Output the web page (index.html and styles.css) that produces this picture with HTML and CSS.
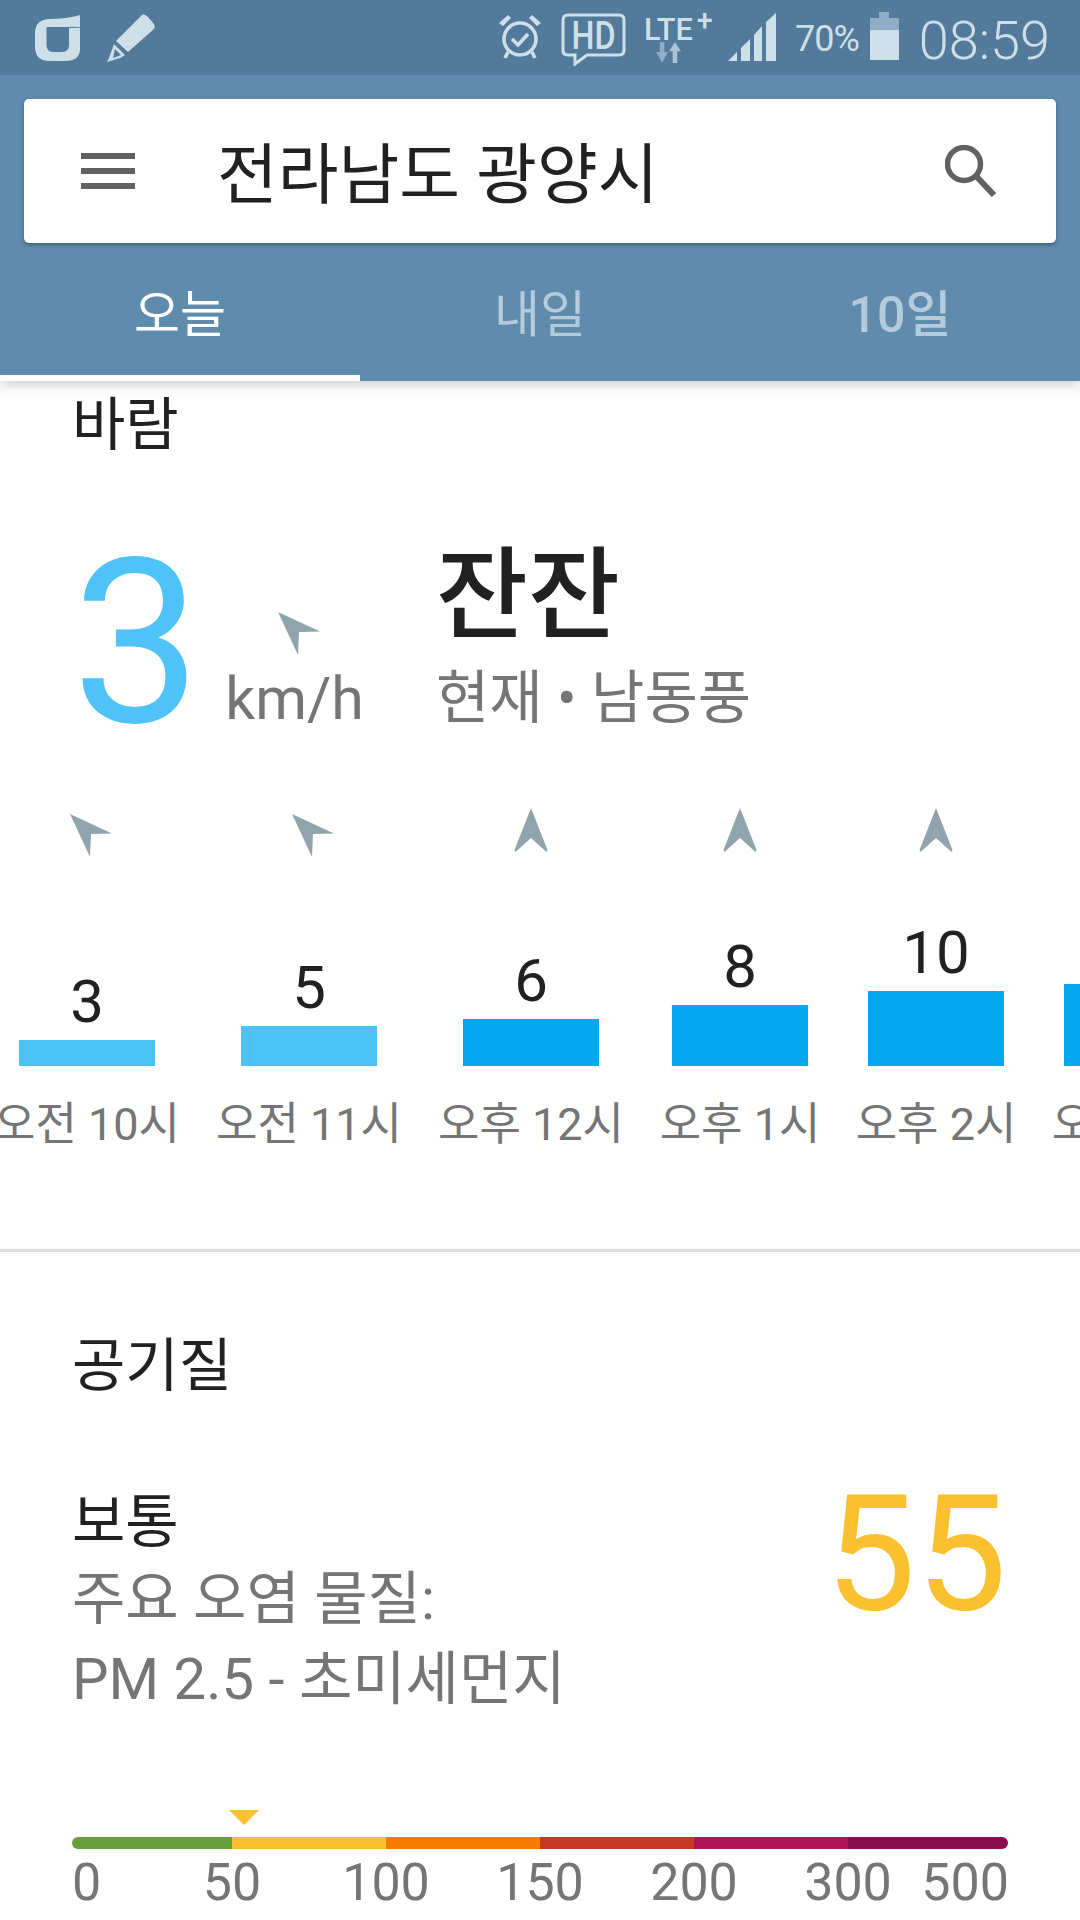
FILE: index.html
```
<!DOCTYPE html>
<html lang="ko">
<head>
<meta charset="utf-8">
<title>날씨</title>
<link rel="stylesheet" href="styles.css">
</head>
<body>
<div class="page">
  <header class="header">
    <div class="status">
      <div class="status-left">
        <svg class="ic-o" viewBox="0 0 45 46"><path class="fill" fill-rule="evenodd" d="M45 0L45 34Q45 46 30 46L15 46Q0 46 0 32L0 18Q0 5 14 4Q32 4 45 0ZM11.500 12L11.500 30Q11.500 37 18 37L27 37Q34 37 34 30L34 13L45 12.500L45 11.500L32 12Z"/></svg>
        <svg class="ic-pen" viewBox="0 0 48 48"><path class="fill" d="M35 1C37 0 39 1 41 3L47 10C48 12 48 13 47 15L21 38L9 27Z"/><path class="fill" fill-rule="evenodd" d="M7 30L18 41L13 44L0 48L2 44ZM8 35L6 44L14 41Z"/></svg>
      </div>
      <div class="status-right">
        <svg class="ic-alarm" viewBox="0 0 44 46"><path class="fill" d="M1 9L10 1L13 4L5 12ZM43 9L34 1L31 4L39 12Z"/><circle class="line" cx="22" cy="25" r="16" stroke-width="3.5"/><path class="line" stroke-width="3.5" d="M14 25L20 31L30 20"/><path class="line" stroke-width="3.5" d="M10 38L7 44M34 38L37 44"/></svg>
        <div class="hd"><svg class="hd-frame" viewBox="0 0 65 53"><path class="line" stroke-width="3" d="M7 2H58Q63 2 63 7V37Q63 42 58 42H26L14 51V42H7Q2 42 2 37V7Q2 2 7 2Z"/></svg><span class="hd-text">HD</span></div>
        <div class="lte">
          <span class="lte-text">LTE<sup class="lte-plus">+</sup></span>
          <svg class="lte-arrows" viewBox="0 0 28 24"><path class="dim" d="M4 0H9V11H13L6.500 23L0 11H4Z"/><path class="dim2" d="M18 23H23V10H27L20.500 0L14 10H18Z"/></svg>
        </div>
        <svg class="ic-signal" viewBox="0 0 48 48"><path class="fill" d="M0 48L9 39V48ZM13 35L22 26V48H13ZM26 22L34 13V48H26ZM38 9L48 0V48H38Z"/></svg>
        <span class="pct">70%</span>
        <div class="battery"><div class="bat-cap"></div><div class="bat-empty"></div><div class="bat-fill"></div></div>
        <span class="clock">08:59</span>
      </div>
    </div>
    <div class="appbar">
      <div class="search">
        <div class="menu"><i></i><i></i><i></i></div>
        <div class="city">전라남도 광양시</div>
        <svg class="ic-search" viewBox="0 0 52 52"><circle cx="19" cy="19" r="16.500" fill="none" stroke="#616161" stroke-width="5.500"/><path d="M31 31L49 50" stroke="#616161" stroke-width="6" fill="none"/></svg>
      </div>
      <nav class="tabs">
        <div class="tab tab-on">오늘</div>
        <div class="tab">내일</div>
        <div class="tab tab-num">10일</div>
      </nav>
    </div>
  </header>

  <main class="content">
    <section class="wind">
      <h2 class="sec-title wind-title">바람</h2>
      <div class="now">
        <div class="now-num">3</div>
        <div class="now-unit">
          <svg class="arrow-main" viewBox="0 0 42 42"><path class="arrow" d="M0 0L42 19.500L21 20L20 43Z"/></svg>
          <span class="unit">km/h</span>
        </div>
        <div class="now-desc">
          <div class="calm">잔잔</div>
          <div class="dir">현재 • 남동풍</div>
        </div>
      </div>
      <div class="hours">
        <div class="hour">
          <svg class="arrow-svg" viewBox="-8 -6 50 50"><path class="arrow" d="M0 0L42 19.500L21 20L20 43Z"/></svg>
          <div class="chart"><span class="val">3</span><div class="bar bar-light h3"></div></div>
          <span class="time">오전 10시</span>
        </div>
        <div class="hour">
          <svg class="arrow-svg" viewBox="-8 -6 50 50"><path class="arrow" d="M0 0L42 19.500L21 20L20 43Z"/></svg>
          <div class="chart"><span class="val">5</span><div class="bar bar-light h5"></div></div>
          <span class="time">오전 11시</span>
        </div>
        <div class="hour">
          <svg class="arrow-svg" viewBox="-8.500 0 50 50"><path class="arrow" d="M16.500 0L33 42L32 44L16.500 30L1 44L0 42Z"/></svg>
          <div class="chart"><span class="val">6</span><div class="bar h6"></div></div>
          <span class="time">오후 12시</span>
        </div>
        <div class="hour">
          <svg class="arrow-svg" viewBox="-8.500 0 50 50"><path class="arrow" d="M16.500 0L33 42L32 44L16.500 30L1 44L0 42Z"/></svg>
          <div class="chart"><span class="val">8</span><div class="bar h8"></div></div>
          <span class="time">오후 1시</span>
        </div>
        <div class="hour">
          <svg class="arrow-svg" viewBox="-8.500 0 50 50"><path class="arrow" d="M16.500 0L33 42L32 44L16.500 30L1 44L0 42Z"/></svg>
          <div class="chart"><span class="val">10</span><div class="bar h10"></div></div>
          <span class="time">오후 2시</span>
        </div>
        <div class="hour">
          <svg class="arrow-svg" viewBox="-8.500 0 50 50"><path class="arrow" d="M16.500 0L33 42L32 44L16.500 30L1 44L0 42Z"/></svg>
          <div class="chart"><span class="val">11</span><div class="bar h11"></div></div>
          <span class="time">오후 3시</span>
        </div>
      </div>
    </section>

    <section class="air">
      <h2 class="sec-title air-title">공기질</h2>
      <div class="air-row">
        <div class="air-text">
          <div class="air-level">보통</div>
          <div class="air-sub">주요 오염 물질:</div>
          <div class="air-sub">PM 2.5 - 초미세먼지</div>
        </div>
        <div class="air-num">55</div>
      </div>
      <div class="scale">
        <div class="marker-row"><div class="marker"></div></div>
        <div class="scale-bar">
          <div class="s s1"></div><div class="s s2"></div><div class="s s3"></div><div class="s s4"></div><div class="s s5"></div><div class="s s6"></div>
        </div>
        <div class="scale-labels">
          <span class="first">0</span><span>50</span><span>100</span><span>150</span><span>200</span><span>300</span><span class="last">500</span>
        </div>
      </div>
    </section>
  </main>
</div>
</body>
</html>
```

FILE: styles.css
```
* { box-sizing: border-box; }
html, body { margin: 0; padding: 0; background: #fff; }
body { font-family: Roboto, "Noto Sans CJK KR", sans-serif; color: #212121; }
.page { width: 1080px; height: 1920px; overflow: hidden; position: relative; background: #fff; }

.header { position: relative; z-index: 2; box-shadow: 0 3px 12px rgba(0,0,0,.22); }
.status { height: 75px; background: #527a9b; display: flex; justify-content: space-between; color: #cfdfe8; }
.status-left { display: flex; padding: 14px 0 0 35px; gap: 27px; align-items: flex-start; }
.status-right { display: flex; padding-right: 30px; align-items: flex-start; position: relative; }
.fill { fill: #cfdfe8; }
.dim { fill: #8fadc4; }
.dim2 { fill: #a9c4d6; }
.line { fill: none; stroke: #cfdfe8; }
.ic-o { width: 45px; height: 46px; margin-top: 1px; }
.ic-pen { width: 48px; height: 48px; }
.ic-alarm { width: 44px; height: 46px; margin: 14px 19px 0 0; }
.hd { position: relative; width: 65px; height: 53px; margin: 13px 18px 0 0; text-align: center; }
.hd-frame { position: absolute; left: 0; top: 0; width: 65px; height: 53px; }
.hd-text { position: relative; display: block; font-size: 38px; line-height: 46px; font-weight: 500; transform: scaleX(.85); }
.lte { width: 72px; margin: 9px 12px 0 0; position: relative; height: 55px; }
.lte-text { font-size: 32px; line-height: 40px; font-weight: 500; display: block; white-space: nowrap; transform: scaleX(.96); transform-origin: left; }
.lte-plus { font-size: 30px; line-height: 0; vertical-align: 10px; font-weight: 500; margin-left: 4px; }
.lte-arrows { position: absolute; left: 12px; top: 33px; width: 26px; height: 22px; }
.ic-signal { width: 48px; height: 48px; margin: 13px 19px 0 0; }
.pct { font-size: 36px; line-height: 42px; margin: 18px 11px 0 0; letter-spacing: -1px; }
.battery { width: 29px; margin: 12px 20px 0 0; display: flex; flex-direction: column; align-items: center; }
.bat-cap { width: 10px; height: 6px; background: #8fadc4; }
.bat-empty { width: 29px; height: 12px; background: #8fadc4; }
.bat-fill { width: 29px; height: 30px; background: #cfdfe8; }
.clock { font-size: 54px; line-height: 62px; margin-top: 10px; font-weight: 300; }

.appbar { height: 306px; background: #5f8bad; padding-top: 24px; }
.search { margin: 0 24px; height: 144px; background: #fff; border-radius: 5px; box-shadow: 0 2px 4px rgba(0,0,0,.3); display: flex; align-items: center; position: relative; }
.menu { width: 54px; margin-left: 57px; display: flex; flex-direction: column; gap: 9px; }
.menu i { display: block; height: 6px; background: #616161; }
.city { margin-left: 82px; padding-top: 10px; font-size: 66px; line-height: 88px; flex: 1; white-space: nowrap; color: #212121; }
.ic-search { width: 52px; height: 52px; margin-right: 59px; }
.tabs { display: grid; grid-template-columns: repeat(3, 360px); height: 138px; }
.tab { text-align: center; font-size: 50px; line-height: 64px; padding-top: 40px; color: #b4cbdc; }
.tab-on { color: #fff; border-bottom: 6px solid #fff; }
.tab-num { font-weight: 500; }

.sec-title { margin: 0; font-size: 58px; font-weight: 400; line-height: 64px; color: #212121; }
.wind-title { padding: 12px 0 0 72px; }
.now { display: flex; align-items: flex-start; padding: 0 0 0 72px; height: 299px; margin-top: 52px; }
.now-num { font-size: 230px; line-height: 270px; color: #4fc3f7; width: 157px; }
.now-unit { display: flex; flex-direction: column; align-items: center; width: 131px; padding-top: 103px; }
.arrow-main { width: 42px; height: 42px; margin-left: 9px; }
.unit { font-size: 59px; line-height: 64px; color: #757575; margin-top: 13px; white-space: nowrap; }
.now-desc { margin-left: 76px; padding-top: 33px; }
.calm { font-size: 100px; font-weight: 500; line-height: 108px; color: #212121; }
.dir { font-size: 58px; line-height: 64px; color: #757575; margin-top: 16px; white-space: nowrap; }
.arrow { fill: #90a4ae; }

.hours { display: grid; grid-template-columns: 222px 222px 222px 196px 196px 196px; margin-left: -24px; width: 1254px; }
.hour { display: flex; flex-direction: column; align-items: center; }
.arrow-svg { width: 50px; height: 50px; }
.chart { height: 208px; display: flex; flex-direction: column; justify-content: flex-end; align-items: center; }
.val { font-size: 60px; line-height: 70px; margin-bottom: 3px; color: #212121; }
.bar { width: 136px; background: #02a8ee; }
.bar-light { background: #4dc3f5; }
.h3 { height: 26px; }
.h5 { height: 40px; }
.h6 { height: 47px; }
.h8 { height: 61px; }
.h10 { height: 75px; }
.h11 { height: 82px; }
.time { font-size: 45px; line-height: 64px; margin-top: 27px; color: #757575; white-space: nowrap; }

.air { border-top: 3px solid #ddd; margin-top: 92px; padding: 0 71px 0 72px; }
.air-title { margin-top: 82px; }
.air-row { display: flex; justify-content: space-between; align-items: flex-start; margin-top: 87px; }
.air-level { font-size: 58px; line-height: 74px; color: #212121; }
.air-sub { font-size: 58px; line-height: 80px; color: #757575; white-space: nowrap; }
.air-num { font-size: 162px; line-height: 160px; color: #fbc02d; margin: -11px 2px 0 0; }
.scale { margin-top: 91px; }
.marker-row { height: 27px; padding-left: 157px; }
.marker { width: 0; height: 0; border-left: 15px solid transparent; border-right: 15px solid transparent; border-top: 15px solid #fbc02d; }
.scale-bar { display: grid; grid-template-columns: 160px 154px 154px 154px 154px 160px; height: 12px; width: 936px; border-radius: 6px; overflow: hidden; }
.s1 { background: #689f38; }
.s2 { background: #fbc02d; }
.s3 { background: #f57c00; }
.s4 { background: #c43a24; }
.s5 { background: #ad1457; }
.s6 { background: #880e4f; }
.scale-labels { display: grid; grid-template-columns: 80px 160px 148px 160px 148px 160px 80px; font-size: 52px; line-height: 58px; color: #757575; text-align: center; margin-top: 5px; }
.first { text-align: left; }
.last { justify-self: end; margin-right: -1px; }
```
